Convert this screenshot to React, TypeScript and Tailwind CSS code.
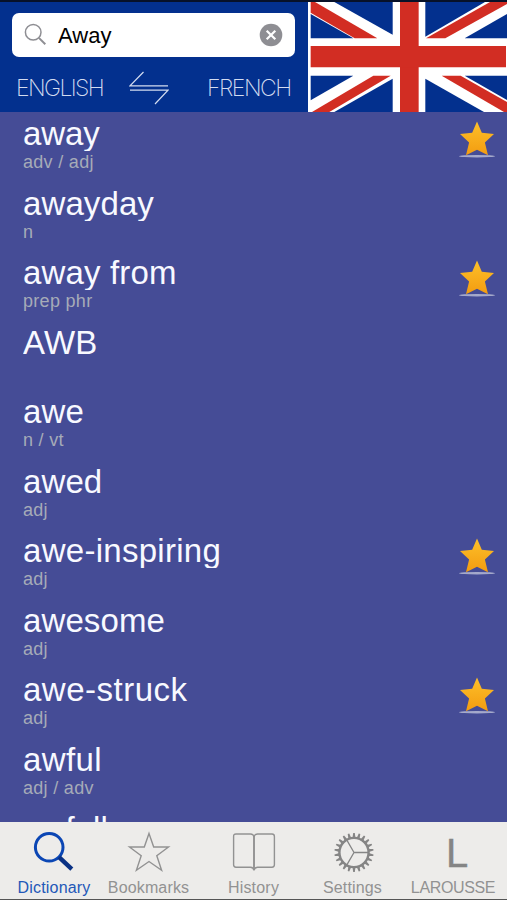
import { useState } from 'react';

interface Entry {
  word: string;
  kind: string;
  starred?: boolean;
  tracking?: string;
}

const entries: Entry[] = [
  { word: 'away', kind: 'adv / adj', starred: true, tracking: 'tracking-[-0.1px]' },
  { word: 'awayday', kind: 'n' },
  { word: 'away from', kind: 'prep phr', starred: true, tracking: 'tracking-[0.15px]' },
  { word: 'AWB', kind: '' },
  { word: 'awe', kind: 'n / vt' },
  { word: 'awed', kind: 'adj' },
  { word: 'awe-inspiring', kind: 'adj', starred: true, tracking: 'tracking-[0.28px]' },
  { word: 'awesome', kind: 'adj' },
  { word: 'awe-struck', kind: 'adj', starred: true, tracking: 'tracking-[0.5px]' },
  { word: 'awful', kind: 'adj / adv', tracking: 'tracking-[0.4px]' },
  { word: 'awfully', kind: 'adv' },
];

function UnionJack() {
  return (
    <svg className="h-[110px] w-[199px] shrink-0" viewBox="24 6 597 330" preserveAspectRatio="none">
      <rect x="24" y="6" width="597" height="330" fill="#fff" />
      <g fill="#03308e">
        <path d="M103 6H278V104Z" />
        <path d="M32 42L160 115H32Z" />
        <path d="M376 6H555L376 110Z" />
        <path d="M621 42V115H494Z" />
        <path d="M32 227H160L32 301Z" />
        <path d="M278 236V336H103Z" />
        <path d="M376 236L552 336H376Z" />
        <path d="M494 227H621V300Z" />
      </g>
      <g fill="#d22d23">
        <path d="M32 6H45L232 115H164L32 38Z" />
        <path d="M570 6H621V12L436 115H378Z" />
        <path d="M220 227H272L88 336H36Z" />
        <path d="M425 227H482L621 306V336H612Z" />
        <path d="M300 6H356V336H300Z" />
        <path d="M32 138H618V202H32Z" />
      </g>
    </svg>
  );
}

function SearchIcon() {
  return (
    <svg className="h-6 w-6 shrink-0" viewBox="0 0 24 24" fill="none" stroke="#8e8e93">
      <circle cx="9.2" cy="9.2" r="7.8" strokeWidth="1.5" />
      <path d="M14.9 14.9L21.3 21.3" strokeWidth="2" />
    </svg>
  );
}

function ClearIcon() {
  return (
    <svg className="h-6 w-6" viewBox="0 0 24 24">
      <circle cx="12" cy="12" r="11.3" fill="#8e8e93" />
      <path d="M7.7 7.7L16.3 16.3M16.3 7.7L7.7 16.3" stroke="#fff" strokeWidth="2.2" />
    </svg>
  );
}

function SwapIcon() {
  return (
    <svg className="h-[34px] w-10" viewBox="0 0 40 34" fill="none" stroke="#d3dcf0" strokeWidth="1.2">
      <path d="M14.5 1L1 14.8H39" />
      <path d="M1 19.2H39L26 33" />
    </svg>
  );
}

function GoldStar() {
  return (
    <svg className="h-10 w-9" viewBox="0 0 36 40">
      <defs>
        <linearGradient id="gold" x1="0" y1="0" x2="0" y2="1">
          <stop offset="0" stopColor="#fdc02a" />
          <stop offset="1" stopColor="#f39c10" />
        </linearGradient>
      </defs>
      <ellipse cx="18" cy="35.2" rx="18" ry="1.3" fill="#a5a9cb" />
      <path
        d="M18 0.4L22.8 11.8L35 13L25.9 21.4L29 34.2L18 28.8L7 34.2L10.1 21.4L1 13L13.2 11.8Z"
        fill="url(#gold)"
      />
    </svg>
  );
}

function DictionaryIcon() {
  return (
    <svg className="h-11 w-11" viewBox="0 0 44 44" fill="none">
      <circle cx="17.2" cy="17.3" r="13.8" stroke="#0b46b4" strokeWidth="3" />
      <path d="M27 27.2L39.8 39.2" stroke="#0a3184" strokeWidth="4.4" />
    </svg>
  );
}

function BookmarkIcon() {
  return (
    <svg className="h-11 w-11" viewBox="0 0 44 44" fill="none" stroke="#929292" strokeWidth="1.4">
      <path d="M22 3.5L26.7 17H41.5L29.8 25.7L34.6 40.3L22 31.5L9.4 40.3L14.2 25.7L2.5 17H17.3Z" />
    </svg>
  );
}

function BookIcon() {
  return (
    <svg className="h-11 w-11" viewBox="0 0 44 44" fill="none" stroke="#929292" strokeWidth="1.4">
      <path d="M22 7Q21.5 4 18.5 4H4Q1.6 4 1.6 6.4V34.8Q1.6 37.2 4 37.2H18.5Q21.5 37.2 22 40.5Q22.5 37.2 25.5 37.2H40Q42.4 37.2 42.4 34.8V6.4Q42.4 4 40 4H25.5Q22.5 4 22 7Z" />
      <path d="M22 6V39" strokeWidth="1.9" />
    </svg>
  );
}

const teeth = Array.from({ length: 22 }, (_, i) => (i * 360) / 22);

function GearIcon() {
  return (
    <svg className="h-11 w-11" viewBox="0 0 44 44" fill="none" stroke="#858585">
      <circle cx="22" cy="22.5" r="14.6" strokeWidth="2.4" />
      {teeth.map((a) => (
        <path key={a} d="M20.5 7.8L21.2 2.9H22.8L23.5 7.8Z" fill="#858585" stroke="none" transform={`rotate(${a} 22 22.5)`} />
      ))}
      <path d="M22 22.5H36M22 22.5L15 10.4M22 22.5L15 34.6" strokeWidth="1.3" />
    </svg>
  );
}

const tabs = [
  { label: 'Dictionary', icon: <DictionaryIcon />, width: 'w-[101px] pl-[7px] tracking-[0.2px]' },
  { label: 'Bookmarks', icon: <BookmarkIcon />, width: 'w-[95px] tracking-[0.15px]' },
  { label: 'History', icon: <BookIcon />, width: 'w-[115px] tracking-[0.2px]' },
  { label: 'Settings', icon: <span className="pl-[3px]"><GearIcon /></span>, width: 'w-[83px] tracking-[0.15px]' },
  {
    label: 'LAROUSSE',
    icon: <span className="pt-0.5 pl-2 text-[40px] leading-[50px] text-[#858585] [-webkit-text-stroke:0.4px_#858585]">L</span>,
    width: 'w-[118px] tracking-[-0.35px]',
  },
];

export default function App() {
  const [query, setQuery] = useState('Away');
  const [active, setActive] = useState('Dictionary');

  return (
    <div className="flex h-[900px] w-[507px] flex-col overflow-hidden border-t-2 border-[#071129] bg-[#454c96] font-['Liberation_Sans',Arial,sans-serif]">
      <header className="flex h-[110px] shrink-0 bg-[#03308e]">
        <div className="flex w-[308px] flex-col">
          <div className="mt-[11px] ml-3 flex h-11 w-[283px] items-center rounded-[7px] bg-white px-3">
            <SearchIcon />
            <input
              className="ml-[10px] w-[180px] bg-transparent text-[22px] text-black outline-none"
              value={query}
              onChange={(e) => setQuery(e.target.value)}
            />
            <button className="ml-auto" onClick={() => setQuery('')}>
              <ClearIcon />
            </button>
          </div>
          <div className="mt-[14px] flex h-[34px] items-center pl-4 font-['Inter',sans-serif] text-[23px] font-extralight text-[#d3dcf0]">
            <span className="w-[113px] tracking-[-1.6px]">ENGLISH</span>
            <SwapIcon />
            <span className="ml-[38px] tracking-[-1.5px]">FRENCH</span>
          </div>
        </div>
        <UnionJack />
      </header>

      <main className="min-h-0 flex-1 overflow-hidden">
        {entries.map((entry) => (
          <div key={entry.word} className="flex h-[69.5px] pr-3 pl-[23px]">
            <div className="flex-1">
              <div
                className={`h-[39px] overflow-hidden text-[33px] leading-[44px] whitespace-nowrap text-[#f8f9ff] ${
                  entry.tracking ?? 'tracking-[0.1px]'
                }`}
              >
                {entry.word}
              </div>
              <div className="h-6 text-[18px] leading-[23px] tracking-[0.3px] text-[#a6abb8]">{entry.kind}</div>
            </div>
            {entry.starred && (
              <div className="pt-[9px]">
                <GoldStar />
              </div>
            )}
          </div>
        ))}
      </main>

      <nav className="flex h-[78px] shrink-0 border-b border-[#555] bg-[#edecea]">
        {tabs.map((tab) => (
          <button
            key={tab.label}
            onClick={() => setActive(tab.label)}
            className={`flex shrink-0 flex-col items-center pt-2 text-[16px] whitespace-nowrap ${tab.width} ${
              active === tab.label ? 'text-[#2358b8]' : 'text-[#929292]'
            }`}
          >
            <span className="flex h-11 items-center">{tab.icon}</span>
            <span className="mt-0.5 leading-6">{tab.label}</span>
          </button>
        ))}
      </nav>
    </div>
  );
}
